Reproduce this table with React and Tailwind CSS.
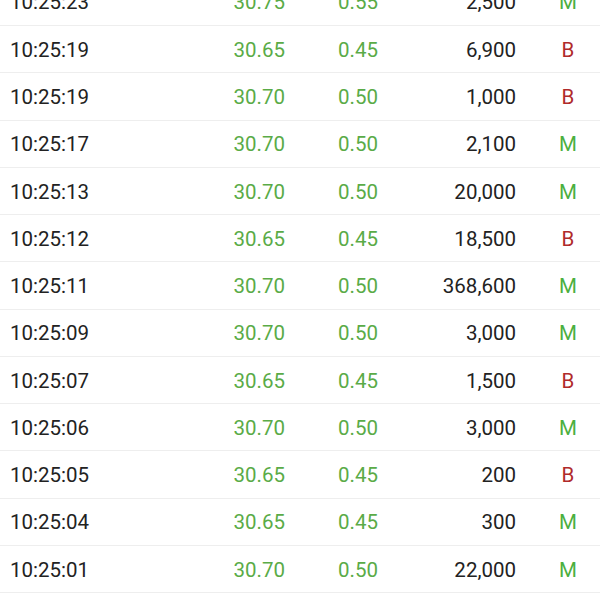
const trades = [
  ["10:25:23", "30.75", "0.55", "2,500", "M"],
  ["10:25:19", "30.65", "0.45", "6,900", "B"],
  ["10:25:19", "30.70", "0.50", "1,000", "B"],
  ["10:25:17", "30.70", "0.50", "2,100", "M"],
  ["10:25:13", "30.70", "0.50", "20,000", "M"],
  ["10:25:12", "30.65", "0.45", "18,500", "B"],
  ["10:25:11", "30.70", "0.50", "368,600", "M"],
  ["10:25:09", "30.70", "0.50", "3,000", "M"],
  ["10:25:07", "30.65", "0.45", "1,500", "B"],
  ["10:25:06", "30.70", "0.50", "3,000", "M"],
  ["10:25:05", "30.65", "0.45", "200", "B"],
  ["10:25:04", "30.65", "0.45", "300", "M"],
  ["10:25:01", "30.70", "0.50", "22,000", "M"],
];

const App = () => {
  return (
    <div className="w-[600px] h-[600px] overflow-hidden bg-white font-['Roboto',sans-serif] text-[20.5px]">
      <div className="-mt-[21.3px]">
        {trades.map(([time, price, chg, vol, side], i) => (
          <div
            key={i}
            className="flex items-center h-[47.27px] pt-[2px] border-b border-[#eeeeee] text-[#222222]"
          >
            <span className="w-[120px] shrink-0 pl-[10px]">{time}</span>
            <span className="w-[165px] shrink-0 text-right text-[#5aab47]">{price}</span>
            <span className="w-[93px] shrink-0 text-right text-[#5aab47]">{chg}</span>
            <span className="w-[138px] shrink-0 text-right">{vol}</span>
            <span
              className={`w-[104px] shrink-0 text-center ${
                side === "M" ? "text-[#4caf3f]" : "text-[#b02a2a]"
              }`}
            >
              {side}
            </span>
          </div>
        ))}
      </div>
    </div>
  );
};

export default App;
